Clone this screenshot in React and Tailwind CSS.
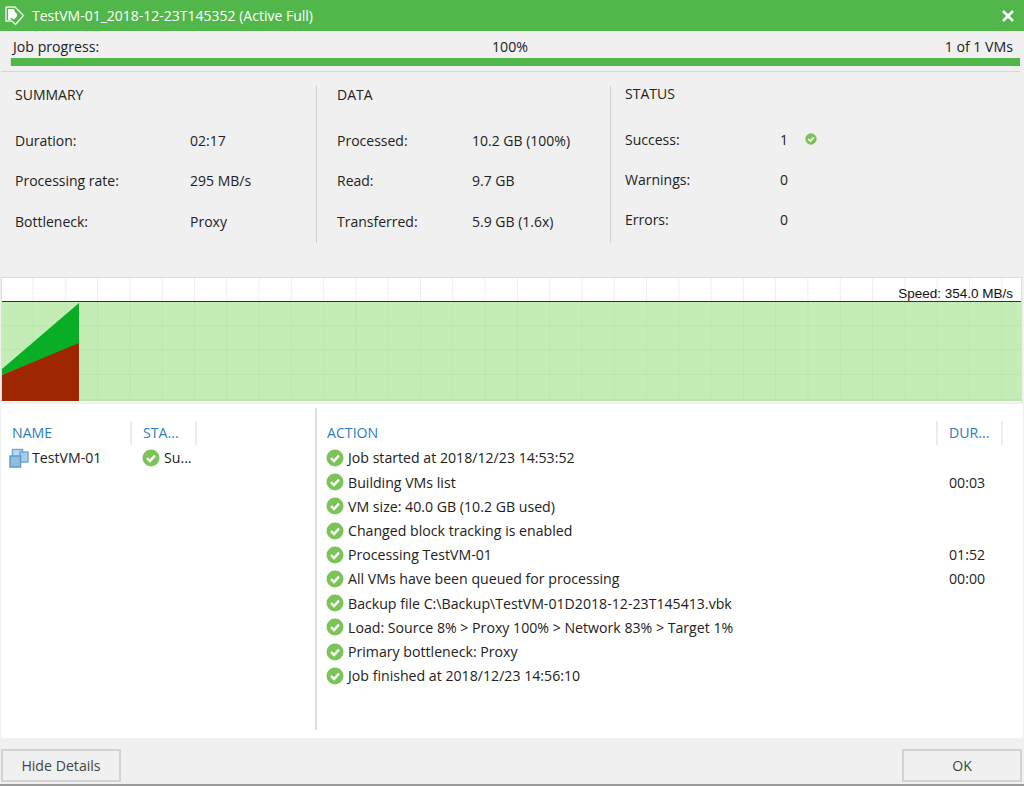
function Check({ size = 18 }) {
  return (
    <svg width={size} height={size} viewBox="0 0 18 18" className="shrink-0">
      <circle cx="9" cy="9" r="8.5" fill="#7cc35a" />
      <path d="M5 9.2 L8 12 L13 6.6" fill="none" stroke="#fff" strokeWidth="2.4" />
    </svg>
  );
}
function Stat({ label, value, vx, extra }) {
  return (
    <div className="flex items-center h-[20px]">
      <span className={vx}>{label}</span>
      <span>{value}</span>
      {extra}
    </div>
  );
}
function Section({ title, rows, col, width, pl, gap, top, extra, border }) {
  return (
    <div className={`${width} ${pl} ${border ? "border-r border-[#cfcfcf]" : ""} h-[157px] text-[14px]`}>
      <div className={`h-[20px] leading-[20px] ${top}`}>{title}</div>
      <div className={`flex flex-col ${gap}`}>
        {rows.map((r, i) => (
          <Stat key={r[0]} label={r[0]} value={r[1]} vx={col} extra={i === 0 ? extra : null} />
        ))}
      </div>
    </div>
  );
}
const actions = [
  ["Job started at 2018/12/23 14:53:52", ""],
  ["Building VMs list", "00:03"],
  ["VM size: 40.0 GB (10.2 GB used)", ""],
  ["Changed block tracking is enabled", ""],
  ["Processing TestVM-01", "01:52"],
  ["All VMs have been queued for processing", "00:00"],
  ["Backup file C:\\Backup\\TestVM-01D2018-12-23T145413.vbk", ""],
  ["Load: Source 8% > Proxy 100% > Network 83% > Target 1%", ""],
  ["Primary bottleneck: Proxy", ""],
  ["Job finished at 2018/12/23 14:56:10", ""],
];
function Chart() {
  const vs = Array.from({ length: 31 }, (_, i) => 31 + i * 32.29);
  return (
    <svg width="1019" height="124" viewBox="0 0 1019 124" className="block">
      <rect width="1019" height="124" fill="#fff" />
      <rect y="23" width="1019" height="100" fill="#c3edb4" />
      {vs.map((x) => (
        <g key={x}>
          <line x1={x} x2={x} y1="0" y2="23" stroke="#efefef" />
          <line x1={x} x2={x} y1="24" y2="122" stroke="#bbe7ac" />
        </g>
      ))}
      {[47, 71, 96].map((y) => (
        <line key={y} x1="0" x2="1019" y1={y + 0.5} y2={y + 0.5} stroke="#bbe7ac" />
      ))}
      <rect y="121" width="1019" height="2" fill="#bbe7ac" />
      <polygon points="0,91 77,25 77,66 0,97" fill="#08ae26" />
      <polygon points="0,97 77,65 77,123 0,123" fill="#9e2600" />
      <line x1="0" x2="1019" y1="23.5" y2="23.5" stroke="#333" />
    </svg>
  );
}
export default function App() {
  return (
    <div
      className="w-[1024px] h-[786px] overflow-hidden flex flex-col bg-[#f0f0f0] text-[14.15px] text-[#222]"
      style={{ fontFamily: '"Open Sans", "Noto Sans", sans-serif' }}
    >
      <div className="h-[31px] shrink-0 bg-[#52b74b] flex items-center text-white text-[14px] pl-[5px] pr-[9px]">
        <svg width="20" height="20" viewBox="0 0 20 20" className="shrink-0">
          <path d="M1 1 H10 L18.5 9.5 L10.5 18.5 L7 15" fill="none" stroke="#e6f4e4" strokeWidth="1.4" />
          <path d="M1 1 V15 H7" fill="none" stroke="#e6f4e4" strokeWidth="1.4" />
          <path d="M3 3 H9 L10 6 L12 8 V11 L8 14 H3 Z" fill="#fff" />
          <path d="M6 12 L9 15 L14 9" fill="none" stroke="#52b74b" strokeWidth="1.6" />
        </svg>
        <span className="ml-[7px] flex-1">TestVM-01_2018-12-23T145352 (Active Full)</span>
        <svg width="14" height="14" viewBox="0 0 14 14">
          <path d="M2 2 L12 12 M12 2 L2 12" stroke="#fff" strokeWidth="2.6" />
        </svg>
      </div>

      <div className="h-[20px] mt-[6px] pl-[13px] pr-[11px] flex justify-between items-center leading-[20px]">
        <span className="w-[324px]">Job progress:</span>
        <span>100%</span>
        <span className="w-[330px] text-right">1 of 1 VMs</span>
      </div>
      <div className="h-[8px] ml-[10px] mr-[4px] mt-[1px] bg-[#52b74b] border-l border-[#cfe8cb]" />
      <div className="h-px mt-[5px] ml-[1px] mr-[4px] bg-[#d6d6d6]" />

      <div className="flex mt-[14px] pl-0 h-[157px]">
        <Section
          title="SUMMARY"
          width="w-[317px]"
          pl="pl-[15px]"
          top="-mt-[1px] mb-[25px]"
          gap="gap-[20.5px]"
          col="w-[175px]"
          border
          rows={[["Duration:", "02:17"], ["Processing rate:", "295 MB/s"], ["Bottleneck:", "Proxy"]]}
        />
        <Section
          title="DATA"
          width="w-[294px]"
          pl="pl-[20px]"
          top="-mt-[1px] mb-[25px]"
          gap="gap-[20.5px]"
          col="w-[135px]"
          border
          rows={[["Processed:", "10.2 GB (100%)"], ["Read:", "9.7 GB"], ["Transferred:", "5.9 GB (1.6x)"]]}
        />
        <Section
          title="STATUS"
          width="flex-1"
          pl="pl-[14px]"
          top="-mt-[2px] mb-[25px]"
          gap="gap-[20px]"
          col="w-[155px]"
          extra={<span className="ml-[17px] -mt-[1px]"><Check size={12} /></span>}
          rows={[["Success:", "1"], ["Warnings:", "0"], ["Errors:", "0"]]}
        />
      </div>

      <div className="relative mt-[34px] ml-[1px] border-t border-x border-[#dcdcdc] w-[1021px]">
        <Chart />
        <span
          className="absolute right-[8px] top-[6px] text-[13.5px] leading-[20px] text-[#111]"
          style={{ fontFamily: '"Liberation Sans", sans-serif' }}
        >
          Speed: 354.0 MB/s
        </span>
      </div>

      <div className="mt-[2px] mx-[1px] h-[334px] bg-white flex pt-[4px]">
        <div className="w-[316px] shrink-0 h-[322px] border-r-2 border-[#dedede]">
          <div className="flex items-center h-[24px] mt-[13px] text-[#2b7cc4]">
            <span className="w-[131px] pl-[11px] h-full flex items-center border-r-2 border-[#ececec]">NAME</span>
            <span className="w-[65px] pl-[11px] h-full flex items-center border-r-2 border-[#ececec]">STA...</span>
          </div>
          <div className="flex items-center h-[24px] mt-[1px]">
            <span className="w-[131px] pl-[8px] flex items-center gap-[3px]">
              <svg width="20" height="20" viewBox="0 0 20 20" className="shrink-0">
                <rect x="3.5" y="1.5" width="10" height="10" fill="#bcd9ee" stroke="#6fabd8" strokeWidth="1.5" />
                <rect x="11" y="4" width="8" height="10" fill="#a9cde9" stroke="#6fabd8" strokeWidth="1.5" />
                <rect x="1" y="8" width="10.5" height="11" fill="#8fbde0" stroke="#5c9ccb" strokeWidth="1.5" />
              </svg>
              TestVM-01
            </span>
            <span className="pl-[10px] flex items-center gap-[4px]">
              <Check />
              Su...
            </span>
          </div>
        </div>
        <div className="flex-1 min-w-0">
          <div className="flex items-center h-[24px] mt-[13px] text-[#2b7cc4]">
            <span className="w-[621px] pl-[10px] h-full flex items-center border-r-2 border-[#ececec]">ACTION</span>
            <span className="w-[65px] pl-[11px] h-full flex items-center border-r-2 border-[#ececec]">DUR...</span>
          </div>
          <div className="mt-[1px] flex flex-col">
            {actions.map(([t, d]) => (
              <div key={t} className="h-[24.2px] flex items-center pl-[9px]">
                <Check />
                <span className="ml-[4px] w-[601px] whitespace-nowrap">{t}</span>
                <span>{d}</span>
              </div>
            ))}
          </div>
        </div>
      </div>

      <div className="flex-1 flex justify-between items-start pt-[11px] pl-[1px] pr-[2px] border-b-2 border-[#9a9a9a]">
        <button className="w-[120px] h-[33px] border-2 border-[#d2d2d2] text-[#444]">Hide Details</button>
        <button className="w-[120px] h-[33px] border-2 border-[#d2d2d2] text-[#444]">OK</button>
      </div>
    </div>
  );
}
